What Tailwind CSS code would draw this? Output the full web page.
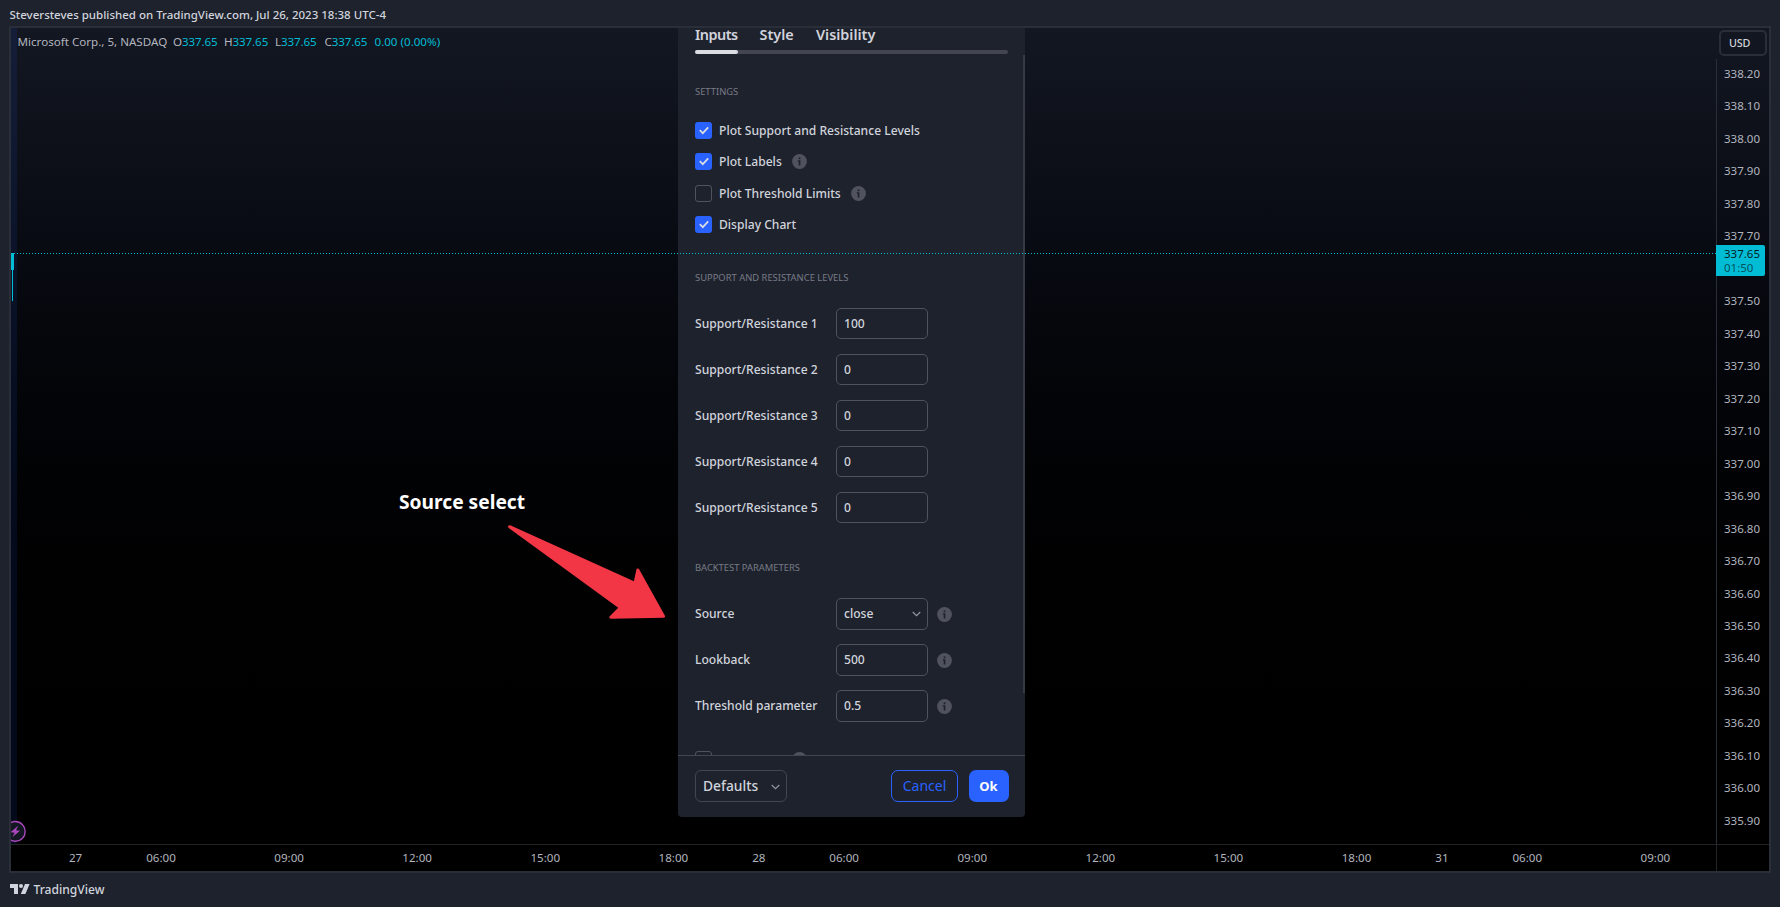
<!DOCTYPE html>
<html lang="en">
<head>
    <meta charset="UTF-8">
    <meta name="viewport" content="width=device-width, initial-scale=1.0">
    <title>MSFT 337.65 - TradingView</title>
    <script src="https://cdn.jsdelivr.net/npm/@tailwindcss/browser@4"></script>
</head>
<body class="w-[1780px] h-[907px] overflow-hidden flex flex-col bg-[#1e222d] text-[#d1d4dc] font-['Noto_Sans','Open_Sans',sans-serif]">
    <header class="h-[26px] pl-[9.5px] pt-[5px] text-[11.5px] leading-[20px] font-medium whitespace-nowrap">Steversteves published on TradingView.com, Jul 26, 2023 18:38 UTC-4</header>

    <main class="relative ml-[9px] w-[1762px] h-[847px] border-2 border-[#2a2e39] bg-linear-to-b from-[#131722] to-black to-95% flex flex-col overflow-hidden">
        <div class="flex h-[816px]">
            <!-- Plot area -->
            <section class="relative w-[1705px]">
                <div class="absolute left-0 top-0 w-[6px] h-full bg-[#2962ff]/10"></div>
                <div class="flex pl-[6.5px] pt-[4px] text-[11.6px] leading-[20px] text-[#b2b5be] whitespace-nowrap">
                    <span class="w-[155.5px]">Microsoft Corp., 5, NASDAQ</span>
                    <span class="w-[51px] tracking-[-0.1px]">O<span class="text-[#00bcd4]">337.65</span></span>
                    <span class="w-[51px] tracking-[-0.1px]">H<span class="text-[#00bcd4]">337.65</span></span>
                    <span class="w-[49.5px] tracking-[-0.1px]">L<span class="text-[#00bcd4]">337.65</span></span>
                    <span class="w-[50px] tracking-[-0.1px]">C<span class="text-[#00bcd4]">337.65</span></span>
                    <span class="text-[#00bcd4]">0.00 (0.00%)</span>
                </div>

                <!-- Candle -->
                <div class="absolute left-0 top-[225px] w-[3px] h-[17px] bg-[#00bcd4]"></div>
                <div class="absolute left-[1px] top-[242px] w-px h-[31px] bg-[#00bcd4]"></div>

                <!-- Annotation -->
                <div class="absolute left-[388px] top-[458px] text-[19.2px] leading-[32px] font-bold text-white whitespace-nowrap">Source select</div>
                <svg class="absolute left-[489px] top-[490px]" width="176" height="110" viewBox="500 518 176 110" fill="#f23645" stroke="#f23645" stroke-width="3" stroke-linejoin="round">
                    <path d="M509.6 526.7 635 583.3 637.8 570 663.5 616.3 610.8 617.3 620.5 607.5Z"/>
                </svg>

                <!-- Economic event -->
                <svg class="absolute left-[-7px] top-[792px]" width="23" height="23" viewBox="0 0 23 23">
                    <circle cx="11.3" cy="11.4" r="9.9" fill="#131722" stroke="#ab47bc" stroke-width="1.4"/>
                    <path d="M14.2 5.8 6.6 12.2 10.6 12.7 8.2 17.2 16 10.8 12 10.3Z" fill="#ab47bc"/>
                </svg>
            </section>

            <!-- Price axis -->
            <aside class="w-[53px] flex flex-col">
                <div class="h-[31px] pt-[2px] pl-[3px]">
                    <div class="w-[48px] h-[26px] border-2 border-[#2a2e39] rounded-[5px] pl-[8px] text-[10.8px] leading-[22px] font-medium tracking-[-0.2px]">USD</div>
                </div>
                <div id="prices" class="flex-1 border-l border-[#2a2e39] pl-[7px] text-[11.5px] text-[#b2b5be]"></div>
            </aside>
        </div>

        <!-- Time axis -->
        <div class="flex h-[27px] border-t border-[#242424] text-[11.6px] leading-[26px] text-[#b2b5be]">
            <div id="times" class="flex w-[1705px]"></div>
            <div class="w-[53px] border-l border-[#242424]"></div>
        </div>

        <!-- Settings dialog -->
        <div class="absolute left-[667px] top-0 w-[347px] h-[789px] rounded-b-[4px] bg-[#1e222d] text-[12.1px] font-medium flex flex-col">
            <div class="relative h-[727px] overflow-hidden pl-[17px]">
                <div class="w-[313px] h-[22px] flex text-[14.4px] leading-[14px] font-semibold whitespace-nowrap">
                    <div class="w-[64.5px] tracking-[-0.5px]">Inputs</div>
                    <div class="w-[56.5px]">Style</div>
                    <div>Visibility</div>
                </div>
                <div class="w-[313px] h-[4px] rounded-full bg-[#434651]"><div class="w-[43px] h-[4px] rounded-full bg-[#dbdde3]"></div></div>

                <h2 class="mt-[28px] h-[20px] text-[9.4px] leading-[20px] font-normal text-[#787b86]">SETTINGS</h2>
                <div id="checks" class="mt-[13px]"></div>

                <h2 class="mt-[27.5px] h-[20px] text-[9.4px] leading-[20px] font-normal text-[#787b86]">SUPPORT AND RESISTANCE LEVELS</h2>
                <div id="levels" class="mt-[13px]"></div>

                <h2 class="mt-[27.5px] h-[20px] text-[9.4px] leading-[20px] font-normal text-[#787b86]">BACKTEST PARAMETERS</h2>
                <div id="params" class="mt-[13px]"></div>

                <div class="mt-[21.8px] flex items-start">
                    <div class="w-[17px] h-[17px] border border-[#50535e] rounded-[3px]"></div>
                    <div class="ml-[79.5px] mt-px w-[15px] h-[15px] rounded-full bg-[#50535e]"></div>
                </div>

                <div class="absolute right-0 top-[27px] w-[2px] h-[638px] bg-[#363a45]"></div>
            </div>

            <div class="flex-1 border-t border-[#434651] flex pl-[17px] pt-[14px]">
                <button class="w-[92px] h-[32px] border border-[#434651] rounded-[6px] flex items-center justify-between pt-px pl-[7px] pr-[6.5px] text-[13.8px]">
                    Defaults
                    <svg width="9" height="6" viewBox="0 0 9 6" fill="none" stroke="#9598a1" stroke-width="1.1"><path d="M.7 1 4.5 4.7 8.3 1"/></svg>
                </button>
                <button class="ml-[104px] w-[67px] h-[32px] border border-[#2962ff] rounded-[7px] text-[14px] leading-[28px] font-normal text-[#2962ff]">Cancel</button>
                <button class="ml-[10.5px] w-[40px] h-[32px] rounded-[7px] bg-[#2962ff] text-[13px] leading-[30px] font-bold text-white">Ok</button>
            </div>
        </div>

        <!-- Last price line, runs above the dialog -->
        <div class="absolute left-0 top-[225px] w-[1705px] h-px bg-[repeating-linear-gradient(to_right,#00bcd4_0_1px,transparent_1px_3px)]"></div>
        <div class="absolute left-[1705px] top-[217px] w-[49px] h-[31px] rounded-r-[2px] bg-[#00bcd4] pl-[8px] pt-[1.5px] text-[11.5px] leading-[14px] text-black/85">
            <div>337.65</div>
            <div class="text-black/60">01:50</div>
        </div>
    </main>

    <footer class="flex pl-[10px] pt-[7px] text-[12.1px] leading-[20px] font-medium">
        <svg class="mt-[4px] mr-[3.5px]" width="20" height="10" viewBox="0 0 20 10" fill="#d1d4dc">
            <path d="M0 0H8V10H4V4H0Z"/>
            <circle cx="11" cy="2" r="2"/>
            <path d="M15 0H19.6L15.4 10H10.8Z"/>
        </svg>
        <span>TradingView</span>
    </footer>

    <script>
        const infoIcon = '<svg width="15" height="15" viewBox="0 0 15 15"><circle cx="7.5" cy="7.5" r="7.4" fill="#50535e"/><rect x="6.7" y="3.4" width="1.7" height="1.8" fill="#1e222d"/><path d="M5.8 6.3H8.4V11.4H6.7V7.4H5.8Z" fill="#1e222d"/></svg>';
        const chevron = '<svg width="9" height="6" viewBox="0 0 9 6" fill="none" stroke="#9598a1" stroke-width="1.1"><path d="M.7 1 4.5 4.7 8.3 1"/></svg>';

        // Price scale, 338.20 down to 335.90. 337.60 is covered by the last price tag.
        let prices = '';
        for (let p = 33820; p >= 33590; p -= 10) {
            prices += `<div class="h-[32.478px] leading-[29px]">${p === 33760 ? '' : (p / 100).toFixed(2)}</div>`;
        }
        document.getElementById('prices').innerHTML = prices;

        const first = 'ml-[64.6px]', short = 'ml-[85.4px]', long = 'ml-[128.1px]';
        const times = [
            ['27', first], ['06:00', short], ['09:00', long], ['12:00', long], ['15:00', long], ['18:00', long],
            ['28', short], ['06:00', short], ['09:00', long], ['12:00', long], ['15:00', long], ['18:00', long],
            ['31', short], ['06:00', short], ['09:00', long]
        ];
        document.getElementById('times').innerHTML = times
            .map(([t, gap]) => `<div class="w-0 flex justify-center ${gap}"><span>${t}</span></div>`).join('');

        const checks = [
            ['Plot Support and Resistance Levels', true, false],
            ['Plot Labels', true, true],
            ['Plot Threshold Limits', false, true],
            ['Display Chart', true, false]
        ];
        document.getElementById('checks').innerHTML = checks.map(([label, on, info]) => `
            <div class="h-[31.3px] flex items-center">
                <div class="w-[17px] h-[17px] rounded-[3px] flex items-center justify-center ${on ? 'bg-[#2962ff]' : 'border border-[#50535e]'}">
                    ${on ? '<svg width="10" height="9" viewBox="0 0 10 9" fill="none" stroke="#dbdde3" stroke-width="1.7"><path d="M.8 4.2 3.8 7.2 9.2 1.4"/></svg>' : ''}
                </div>
                <span class="pt-px ml-[7px] mr-[10px]">${label}</span>
                ${info ? infoIcon : ''}
            </div>`).join('');

        const field = (label, value, info, select) => `
            <div class="h-[46px] flex items-center">
                <span class="w-[141px]">${label}</span>
                <div class="w-[92px] mr-[9px] border border-[#50535e] rounded-[5px] pl-[7px] pr-[6px] flex items-center justify-between ${info ? 'h-[32px]' : 'h-[31px]'}">${value}${select ? chevron : ''}</div>
                ${info ? infoIcon : ''}
            </div>`;
        document.getElementById('levels').innerHTML = [100, 0, 0, 0, 0].map((v, i) => field('Support/Resistance ' + (i + 1), v)).join('');
        document.getElementById('params').innerHTML =
            field('Source', 'close', true, true) + field('Lookback', '500', true) + field('Threshold parameter', '0.5', true);
    </script>
</body>
</html>
